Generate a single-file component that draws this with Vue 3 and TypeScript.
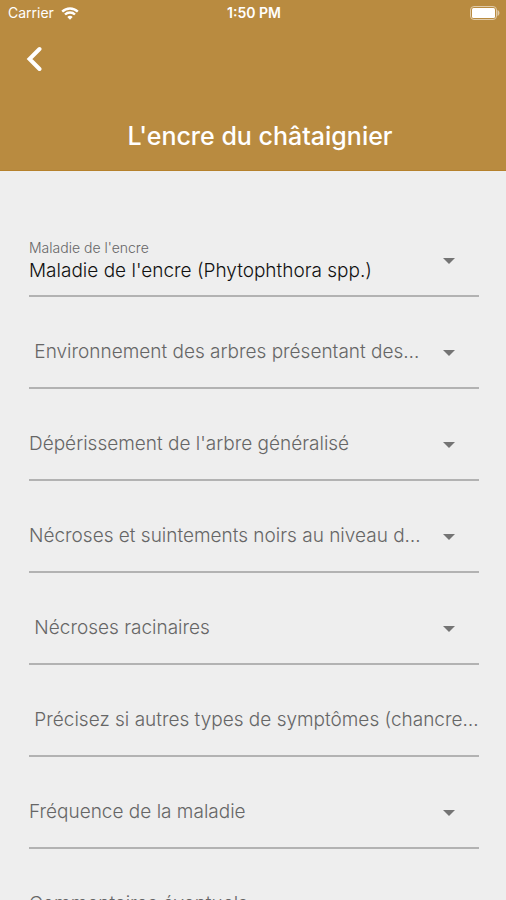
<script setup lang="ts">
import { ref } from 'vue'

interface Field {
  id: string
  label: string
  kind: 'select' | 'text'
  value: string
  options: string[]
}

const fields = ref<Field[]>([
  {
    id: 'maladie',
    label: "Maladie de l'encre",
    kind: 'select',
    value: "Maladie de l'encre (Phytophthora spp.)",
    options: ["Maladie de l'encre (Phytophthora spp.)"],
  },
  { id: 'environnement', label: ' Environnement des arbres présentant des…', kind: 'select', value: '', options: [] },
  { id: 'deperissement', label: "Dépérissement de l'arbre généralisé", kind: 'select', value: '', options: [] },
  { id: 'suintements', label: 'Nécroses et suintements noirs au niveau d…', kind: 'select', value: '', options: [] },
  { id: 'racinaires', label: ' Nécroses racinaires', kind: 'select', value: '', options: [] },
  { id: 'autres', label: ' Précisez si autres types de symptômes (chancre…', kind: 'text', value: '', options: [] },
  { id: 'frequence', label: 'Fréquence de la maladie', kind: 'select', value: '', options: [] },
  { id: 'commentaires', label: 'Commentaires éventuels', kind: 'text', value: '', options: [] },
])
</script>

<template>
  <div class="screen">
    <header class="header">
      <div class="status">
        <div class="carrier">
          <span>Carrier</span>
          <svg class="wifi" viewBox="0 0 18 13" aria-hidden="true">
            <path d="M1.2 4.6a11.2 11.2 0 0 1 15.6 0" />
            <path d="M4 7.5a7.2 7.2 0 0 1 10 0" />
            <path class="dot" d="M9 12.8L6.3 10a3.8 3.8 0 0 1 5.4 0z" />
          </svg>
        </div>
        <span class="time">1:50 PM</span>
        <svg class="battery" viewBox="0 0 30 14" aria-hidden="true">
          <rect class="shell" x="0.5" y="0.5" width="26" height="13" rx="3.5" />
          <rect class="charge" x="2" y="2" width="23" height="10" rx="1.5" />
          <path class="tip" d="M27.5 4c2.6 1 2.6 5 0 6z" />
        </svg>
      </div>
      <button class="back" type="button" aria-label="Retour">
        <svg viewBox="0 0 16 26" aria-hidden="true">
          <path d="M13.5 3L3.5 13l10 10" />
        </svg>
      </button>
      <h1 class="title">L'encre du châtaignier</h1>
    </header>

    <main class="form">
      <div v-for="field in fields" :key="field.id" class="field" :class="{ filled: field.value !== '' }">
        <label class="label" :for="field.id">{{ field.label }}</label>
        <template v-if="field.kind === 'select'">
          <select :id="field.id" v-model="field.value" class="control">
            <option v-for="option in field.options" :key="option" :value="option">{{ option }}</option>
          </select>
          <svg class="arrow" viewBox="0 0 12 6" aria-hidden="true"><path d="M0 0h12L6 6z" /></svg>
        </template>
        <input v-else :id="field.id" v-model="field.value" class="control" type="text" />
      </div>
    </main>
  </div>
</template>

<style>
body {
  background: #eeeeee;
}
</style>

<style scoped>
.screen {
  display: flex;
  flex-direction: column;
  height: 100vh;
  background: #eeeeee;
  font-family: Inter, "Liberation Sans", sans-serif;
}

.header {
  display: flex;
  flex-direction: column;
  flex: none;
  background: #b98b40;
  border-bottom: 1px solid #b5812c;
  color: #ffffff;
}

.status {
  display: grid;
  grid-template-columns: 1fr auto 1fr;
  align-items: center;
  height: 26px;
  padding: 0 6px 0 8px;
  font-size: 14px;
  line-height: 16px;
}

.carrier {
  display: flex;
  align-items: center;
  gap: 7px;
}

.wifi {
  width: 18px;
  height: 13px;
  fill: none;
  stroke: #ffffff;
  stroke-width: 2.4;
}

.wifi .dot {
  fill: #ffffff;
  stroke: none;
}

.time {
  font-weight: 600;
}

.battery {
  justify-self: end;
  width: 30px;
  height: 14px;
}

.shell {
  fill: none;
  stroke: #e0cba9;
}

.charge {
  fill: #ffffff;
}

.tip {
  fill: #e0cba9;
}

.back {
  display: flex;
  align-self: flex-start;
  margin: 20px 0 0 20px;
  padding: 0 6px;
  border: 0;
  background: none;
  cursor: pointer;
}

.back svg {
  width: 16px;
  height: 26px;
  fill: none;
  stroke: #ffffff;
  stroke-width: 4;
  stroke-linecap: round;
}

.title {
  margin: 0;
  padding: 48px 0 18px 14px;
  font-size: 25px;
  font-weight: 500;
  line-height: 32px;
  text-align: center;
}

.form {
  flex: 1;
  min-height: 0;
  overflow-y: auto;
  scrollbar-width: none;
  padding: 34px 27px 34px 29px;
}

.field {
  position: relative;
  display: flex;
  align-items: flex-end;
  height: 92px;
  box-sizing: border-box;
  border-bottom: 2px solid #b2b2b2;
}

.label {
  position: absolute;
  left: 0;
  right: 0;
  bottom: 23px;
  color: #666666;
  font-size: 19px;
  font-weight: 300;
  line-height: 24px;
  white-space: pre;
  pointer-events: none;
}

.filled .label {
  bottom: 37px;
  font-size: 14px;
  line-height: 20px;
}

.control {
  flex: 1;
  min-width: 0;
  height: 54px;
  margin: 0;
  padding: 18px 60px 12px 0;
  border: 0;
  border-radius: 0;
  outline: 0;
  appearance: none;
  background: transparent;
  color: #111111;
  font-family: inherit;
  font-size: 19px;
  font-weight: 300;
  line-height: 24px;
}

.arrow {
  position: absolute;
  right: 24px;
  bottom: 31px;
  width: 12px;
  height: 6px;
  fill: #747474;
  pointer-events: none;
}
</style>
